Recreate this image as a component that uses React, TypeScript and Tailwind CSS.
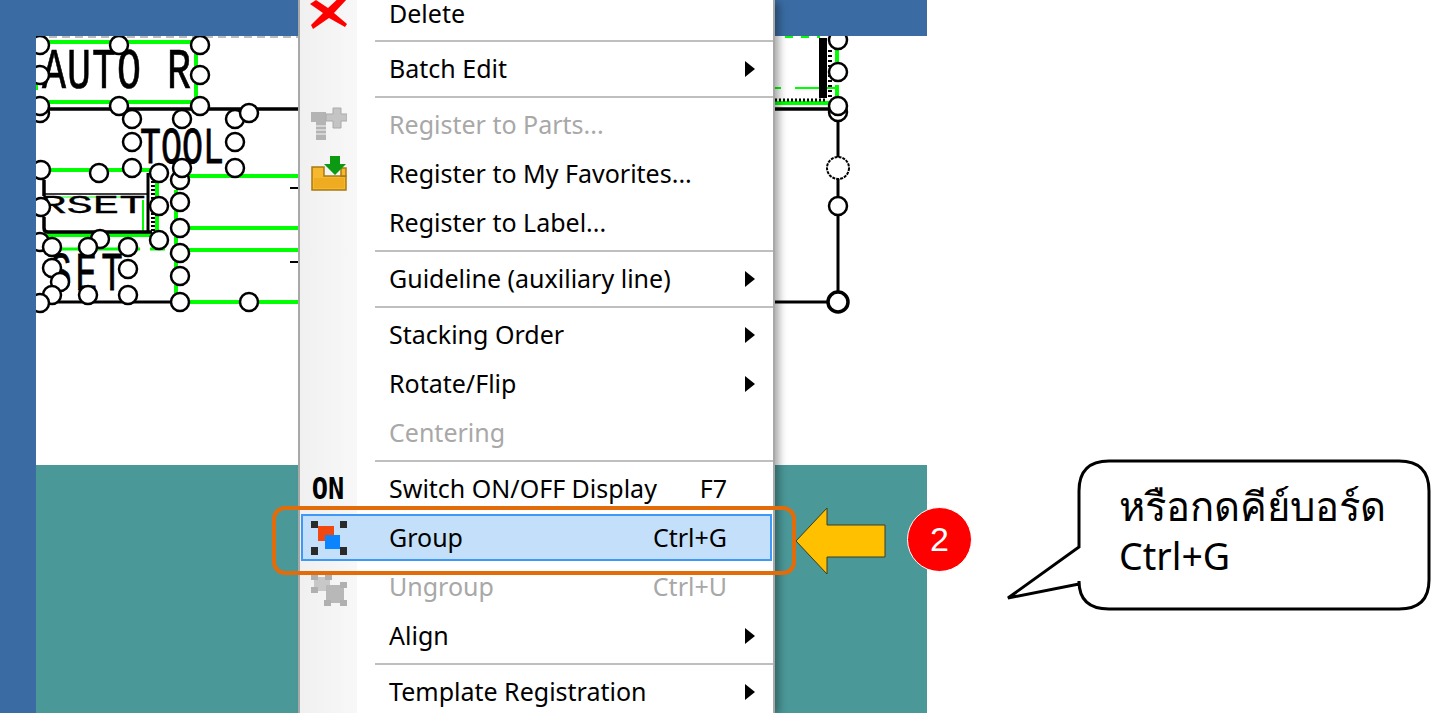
const handles = [
  [40, 45], [119, 45], [200, 45], [40, 75], [200, 75], [40, 113], [40, 106], [119, 106], [200, 106],
  [132, 119], [182, 119], [235, 119], [249, 113], [132, 142], [235, 142], [180, 180], [132, 168], [182, 168], [235, 168],
  [41, 170], [99, 173], [159, 173], [41, 207], [159, 206], [180, 202], [180, 228], [159, 240],
  [100, 239], [40, 242], [52, 247], [88, 247], [128, 247], [52, 268], [128, 269], [60, 282],
  [180, 253], [180, 276], [52, 295], [88, 295], [128, 295], [40, 303], [180, 302], [249, 302],
  [838, 40], [838, 72], [838, 112], [838, 106], [838, 206],
];

function Schematic() {
  return (
    <svg width="891" height="429" viewBox="36 36 891 429" className="block">
      <line x1="36" y1="37" x2="298" y2="37" stroke="#bbb" strokeWidth="2" strokeDasharray="8 5" />
      <line x1="785" y1="37" x2="820" y2="37" stroke="#00ff00" strokeWidth="2" strokeDasharray="8 8" />
      {/* green wires */}
      <g stroke="#00ff00" strokeWidth="4" fill="none">
        <path d="M45 42H196V102H45" />
        <path d="M36 72V90" />
        <path d="M45 170H150" />
        <path d="M45 235H153" />
        <path d="M157 182V235" />
        <path d="M185 176H298M185 228H298M185 250H298M185 302H298" />
        <path d="M176 190V300" />
        <path d="M60 249H140M150 249H165" strokeWidth="3" />
        <path d="M775 103H830M837 50V62M837 85V98" />
        <path d="M775 88H781M795 88H838" strokeWidth="2" />
      </g>
      <path d="M143 200V232" stroke="#00ff00" strokeWidth="2" />
      <path d="M45 197H140" stroke="#00ff00" strokeWidth="1" />
      {/* black wires */}
      <g stroke="#000" fill="none">
        <path d="M36 109H298" strokeWidth="3.5" />
        <path d="M36 302H180" strokeWidth="3" />
        <path d="M44 180V196M44 217V228Q44 232 48 232H152" strokeWidth="3.5" />
        <path d="M44 194H148" strokeWidth="1.5" />
        <path d="M148 173V232" strokeWidth="3" />
        <path d="M153 173V232" strokeWidth="4" strokeDasharray="2 2" />
        <path d="M290 188H298M290 262H298" strokeWidth="2" />
        <path d="M775 109H835" strokeWidth="3.5" />
        <path d="M775 100H825" strokeWidth="3" strokeDasharray="2 2" />
        <path d="M823 38V98" strokeWidth="8" />
        <path d="M830 50V98" strokeWidth="4" strokeDasharray="2 3" />
        <path d="M838 115V302H775" strokeWidth="3" />
      </g>
      {/* labels of the drawing */}
      <g fontFamily="'Liberation Mono', monospace" fill="#000" stroke="#000" strokeWidth="0.5">
        <text transform="translate(42 88) scale(1 1.45)" fontSize="40" letterSpacing="1">AUTO R</text>
        <text transform="translate(140 163) scale(1 1.5)" fontSize="35">TOOL</text>
        <text transform="translate(40 213) scale(1 0.6)" fontSize="44">RSET</text>
        <text transform="translate(50 290) scale(1 1.5)" fontSize="36" letterSpacing="4">SET</text>
      </g>
      {handles.map(([cx, cy], i) => (
        <circle key={i} cx={cx} cy={cy} r="9" fill="#fff" stroke="#000" strokeWidth="2.5" />
      ))}
      <circle cx="838" cy="168" r="11" fill="#fff" stroke="#000" strokeWidth="2" strokeDasharray="3 1" />
      <circle cx="838" cy="302" r="10" fill="#fff" stroke="#000" strokeWidth="3.5" />
    </svg>
  );
}

function DeleteIcon() {
  return (
    <svg width="38" height="38" viewBox="0 0 38 38" className="shrink-0">
      <path d="M6 5 L18 13 L32 0 L37 4 L24 18 L37 29 L35 32 L19 23 L3 34 L1 30 L13 18 L0 9 Z" fill="#ff0000" />
    </svg>
  );
}

function PartsIcon() {
  return (
    <svg width="36" height="34" viewBox="0 0 36 34" className="-translate-y-[1px]">
      <path d="M0 5H15V15H15V33H5V15H0Z" fill="#b4b4b4" />
      <path d="M5 19H15M5 23H15M5 27H15" stroke="#e0e0e0" strokeWidth="1.5" />
      <path d="M22 1H30V7H36V14H30V21H22V14H15V7H22Z" fill="#c4c4c4" stroke="#aaa" />
    </svg>
  );
}

function FolderIcon() {
  return (
    <svg width="36" height="35" viewBox="0 0 36 35">
      <path d="M1 11H13V20H35V34H1Z" fill="#f6b82e" stroke="#a87a14" strokeWidth="1.5" />
      <path d="M30 12H35V20H30Z" fill="#f6b82e" stroke="#a87a14" strokeWidth="1.5" />
      <path d="M3 22H33V32H3Z" fill="#f0ac20" />
      <path d="M24 19L13 8H19V0H29V8H35Z" fill="#0c9a12" />
    </svg>
  );
}

function GroupIcon() {
  return (
    <svg width="36" height="34" viewBox="0 0 36 34">
      <g fill="#2a2a2a">
        <rect x="0" y="0" width="7" height="7" />
        <rect x="29" y="0" width="7" height="7" />
        <rect x="0" y="26" width="7" height="8" />
        <rect x="29" y="26" width="7" height="8" />
      </g>
      <rect x="7" y="5" width="16" height="15" fill="#f04810" />
      <rect x="14" y="14" width="15" height="14" fill="#0a84ff" />
    </svg>
  );
}

function UngroupIcon() {
  return (
    <svg width="36" height="32" viewBox="0 0 36 32" className="translate-y-[3px]">
      <rect x="3" y="3" width="16" height="14" fill="#c8c8c8" />
      <rect x="15" y="11" width="18" height="18" fill="#b8b8b8" />
      <g fill="#b0b0b0">
        <rect x="0" y="0" width="7" height="6" />
        <rect x="14" y="0" width="7" height="6" />
        <rect x="0" y="13" width="7" height="6" />
        <rect x="29" y="8" width="7" height="6" />
        <rect x="13" y="26" width="7" height="6" />
        <rect x="29" y="26" width="7" height="6" />
      </g>
    </svg>
  );
}

type Row =
  | { sep: true }
  | {
      sep?: false;
      label: string;
      icon?: React.ReactNode;
      shortcut?: string;
      arrow?: boolean;
      disabled?: boolean;
      active?: boolean;
      clipped?: boolean;
    };

const rows: Row[] = [
  { label: 'Delete', icon: <DeleteIcon />, clipped: true },
  { sep: true },
  { label: 'Batch Edit', arrow: true },
  { sep: true },
  { label: 'Register to Parts...', icon: <PartsIcon />, disabled: true },
  { label: 'Register to My Favorites...', icon: <FolderIcon /> },
  { label: 'Register to Label...' },
  { sep: true },
  { label: 'Guideline (auxiliary line)', arrow: true },
  { sep: true },
  { label: 'Stacking Order', arrow: true },
  { label: 'Rotate/Flip', arrow: true },
  { label: 'Centering', disabled: true },
  { sep: true },
  {
    label: 'Switch ON/OFF Display',
    shortcut: 'F7',
    icon: <span className="font-['DejaVu_Sans_Mono',monospace] text-[30px] leading-[30px] font-bold text-black [transform:scaleX(0.9)]">ON</span>,
  },
  { label: 'Group', shortcut: 'Ctrl+G', icon: <GroupIcon />, active: true },
  { label: 'Ungroup', shortcut: 'Ctrl+U', icon: <UngroupIcon />, disabled: true },
  { label: 'Align', arrow: true },
  { sep: true },
  { label: 'Template Registration', arrow: true },
];

function ContextMenu() {
  return (
    <div className="absolute left-[298px] top-0 w-[477px] border-x-2 border-[#a8a8a8] bg-white font-['Noto_Sans',sans-serif] text-[25px] leading-[27px] shadow-[6px_0_8px_-2px_rgba(0,0,0,0.35)]">
      <div className="absolute inset-y-0 left-0 w-[57px] bg-gradient-to-r from-[#f0f0f0] to-[#f8f8f8]" />
      {rows.map((row, i) =>
        row.sep ? (
          <div key={i} className="relative flex h-[7px] items-center pl-[75px]">
            <div className="h-[2px] w-full bg-[#bfbfbf]" />
          </div>
        ) : (
          <div
            key={i}
            className={`relative flex items-center ${row.clipped ? 'h-[37px] pb-[10px]' : 'h-[49px]'} ${row.disabled ? 'text-[#a8a8a8]' : 'text-black'}`}
          >
            {row.active && <div className="absolute inset-x-[1px] inset-y-[1px] border-2 border-[#3d98f7] bg-[#c3dffa]" />}
            <div className="relative flex w-[57px] shrink-0 justify-center">{row.icon}</div>
            <span className="relative ml-[32px]">{row.label}</span>
            {row.shortcut && <span className="relative ml-auto mr-[46px]">{row.shortcut}</span>}
            {row.arrow && (
              <span className="absolute left-[445px] top-1/2 h-0 w-0 -translate-y-1/2 border-y-[8px] border-l-[10px] border-y-transparent border-l-black" />
            )}
          </div>
        ),
      )}
    </div>
  );
}

function Callout() {
  return (
    <div className="absolute left-[1005px] top-[459px] h-[153px] w-[426px]">
      <svg width="426" height="153" viewBox="0 0 426 153" className="block">
        <path
          d="M104 2H394Q424 2 424 32V121Q424 150 394 150H104Q74 150 74 122V125L3 139L74 88V32Q74 2 104 2Z"
          fill="#fff"
          stroke="#000"
          strokeWidth="3"
        />
      </svg>
      <div className="absolute left-[114px] top-[22px] font-['Noto_Sans',sans-serif] leading-[50px] text-black">
        <div className="text-[40px]">หรือกดคีย์บอร์ด</div>
        <div className="text-[37.5px]">Ctrl+G</div>
      </div>
    </div>
  );
}

export default function App() {
  return (
    <div className="relative h-[713px] w-full overflow-hidden bg-white">
      <div className="flex h-full w-[927px] flex-col">
        <div className="h-[36px] shrink-0 bg-[#3a6ca3]" />
        <div className="flex flex-1">
          <div className="w-[36px] shrink-0 bg-[#3a6ca3]" />
          <div className="flex flex-1 flex-col">
            <Schematic />
            <div className="flex-1 bg-[#4b9899]" />
          </div>
        </div>
      </div>

      <ContextMenu />

      {/* annotations */}
      <div className="absolute left-[272px] top-[506px] h-[69px] w-[524px] rounded-[13px] border-[4px] border-[#e36c0a]" />
      <svg width="92" height="68" viewBox="0 0 92 68" className="absolute left-[795px] top-[507px]">
        <path d="M1 34L32 1V18H90V50H32V67Z" fill="#ffc000" stroke="#3c3c20" strokeWidth="1" />
      </svg>
      <div className="absolute left-[907px] top-[507px] flex h-[65px] w-[65px] items-center justify-center rounded-full border border-white bg-[#ff0000] font-['Liberation_Sans',sans-serif] text-[34px] text-white">
        2
      </div>
      <Callout />
    </div>
  );
}
